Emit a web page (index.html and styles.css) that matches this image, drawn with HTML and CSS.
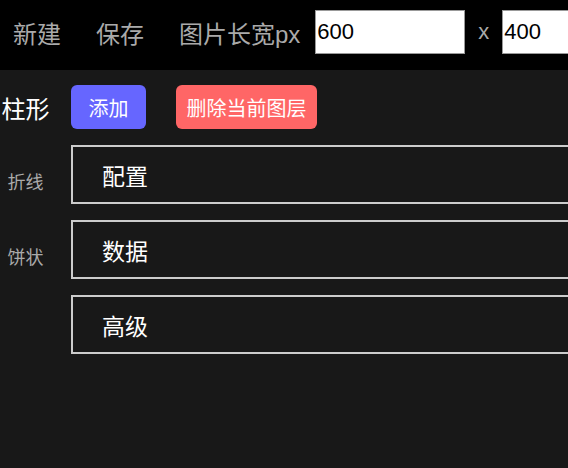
FILE: index.html
```html
<!DOCTYPE html>
<html lang="zh">
<head>
<meta charset="utf-8">
<title>图表编辑器</title>
<link rel="stylesheet" href="styles.css">
</head>
<body>
<header class="topbar">
  <span class="menu-item">新建</span>
  <span class="menu-item">保存</span>
  <span class="size-label">图片长宽px</span>
  <input class="size-input" type="text" value="600">
  <span class="times">x</span>
  <input class="size-input" type="text" value="400">
</header>
<main class="main">
  <nav class="sidebar">
    <div class="side-item active">柱形</div>
    <div class="side-item">折线</div>
    <div class="side-item">饼状</div>
  </nav>
  <section class="content">
    <div class="toolbar">
      <button class="btn btn-add">添加</button>
      <button class="btn btn-delete">删除当前图层</button>
    </div>
    <div class="panel">配置</div>
    <div class="panel">数据</div>
    <div class="panel">高级</div>
  </section>
</main>
</body>
</html>
```
FILE: styles.css
```css
html, body {
  margin: 0;
  padding: 0;
  overflow: hidden;
}
body {
  background: #181818;
  font-family: "Liberation Sans", "Noto Sans CJK SC", sans-serif;
  width: 568px;
  height: 468px;
}
.topbar {
  box-sizing: border-box;
  height: 70px;
  padding: 0 0 6px 13px;
  background: #000;
  display: flex;
  align-items: center;
  color: #aaaaaa;
  font-size: 24px;
  white-space: nowrap;
  overflow: hidden;
}
.menu-item {
  margin-right: 35px;
}
.size-label {
  margin-right: 15px;
}
.size-input {
  flex: none;
  box-sizing: border-box;
  width: 150px;
  height: 44px;
  margin: 0;
  padding: 0 1px;
  border: 1px solid #999;
  background: #fff;
  color: #000;
  font-family: "Liberation Sans", sans-serif;
  font-size: 22px;
  outline: none;
}
.times {
  font-size: 22px;
  margin: 0 13px;
}
.main {
  display: flex;
  overflow: hidden;
}
.sidebar {
  width: 51px;
  flex: none;
  margin-right: 20px;
  padding-top: 15px;
  display: flex;
  flex-direction: column;
  gap: 30px;
}
.side-item {
  height: 44px;
  display: flex;
  align-items: center;
  justify-content: center;
  color: #aaaaaa;
  font-size: 18px;
}
.side-item:nth-child(3) {
  margin-top: 1px;
}
.side-item.active {
  color: #fff;
  font-size: 24px;
}
.content {
  flex: none;
  width: 520px;
  padding-top: 15px;
  display: flex;
  flex-direction: column;
  gap: 16px;
}
.toolbar {
  display: flex;
  gap: 30px;
}
.btn {
  height: 44px;
  border: none;
  border-radius: 6px;
  color: #fff;
  font-family: "Noto Sans CJK SC", sans-serif;
  font-size: 20px;
  padding: 0;
  cursor: pointer;
}
.btn-add {
  width: 75px;
  background: #6666ff;
}
.btn-delete {
  width: 141px;
  background: #ff6666;
}
.panel {
  box-sizing: border-box;
  height: 59px;
  border: 2px solid #cccccc;
  border-right: none;
  display: flex;
  align-items: center;
  padding-left: 29px;
  color: #fff;
  font-size: 23px;
}
```
